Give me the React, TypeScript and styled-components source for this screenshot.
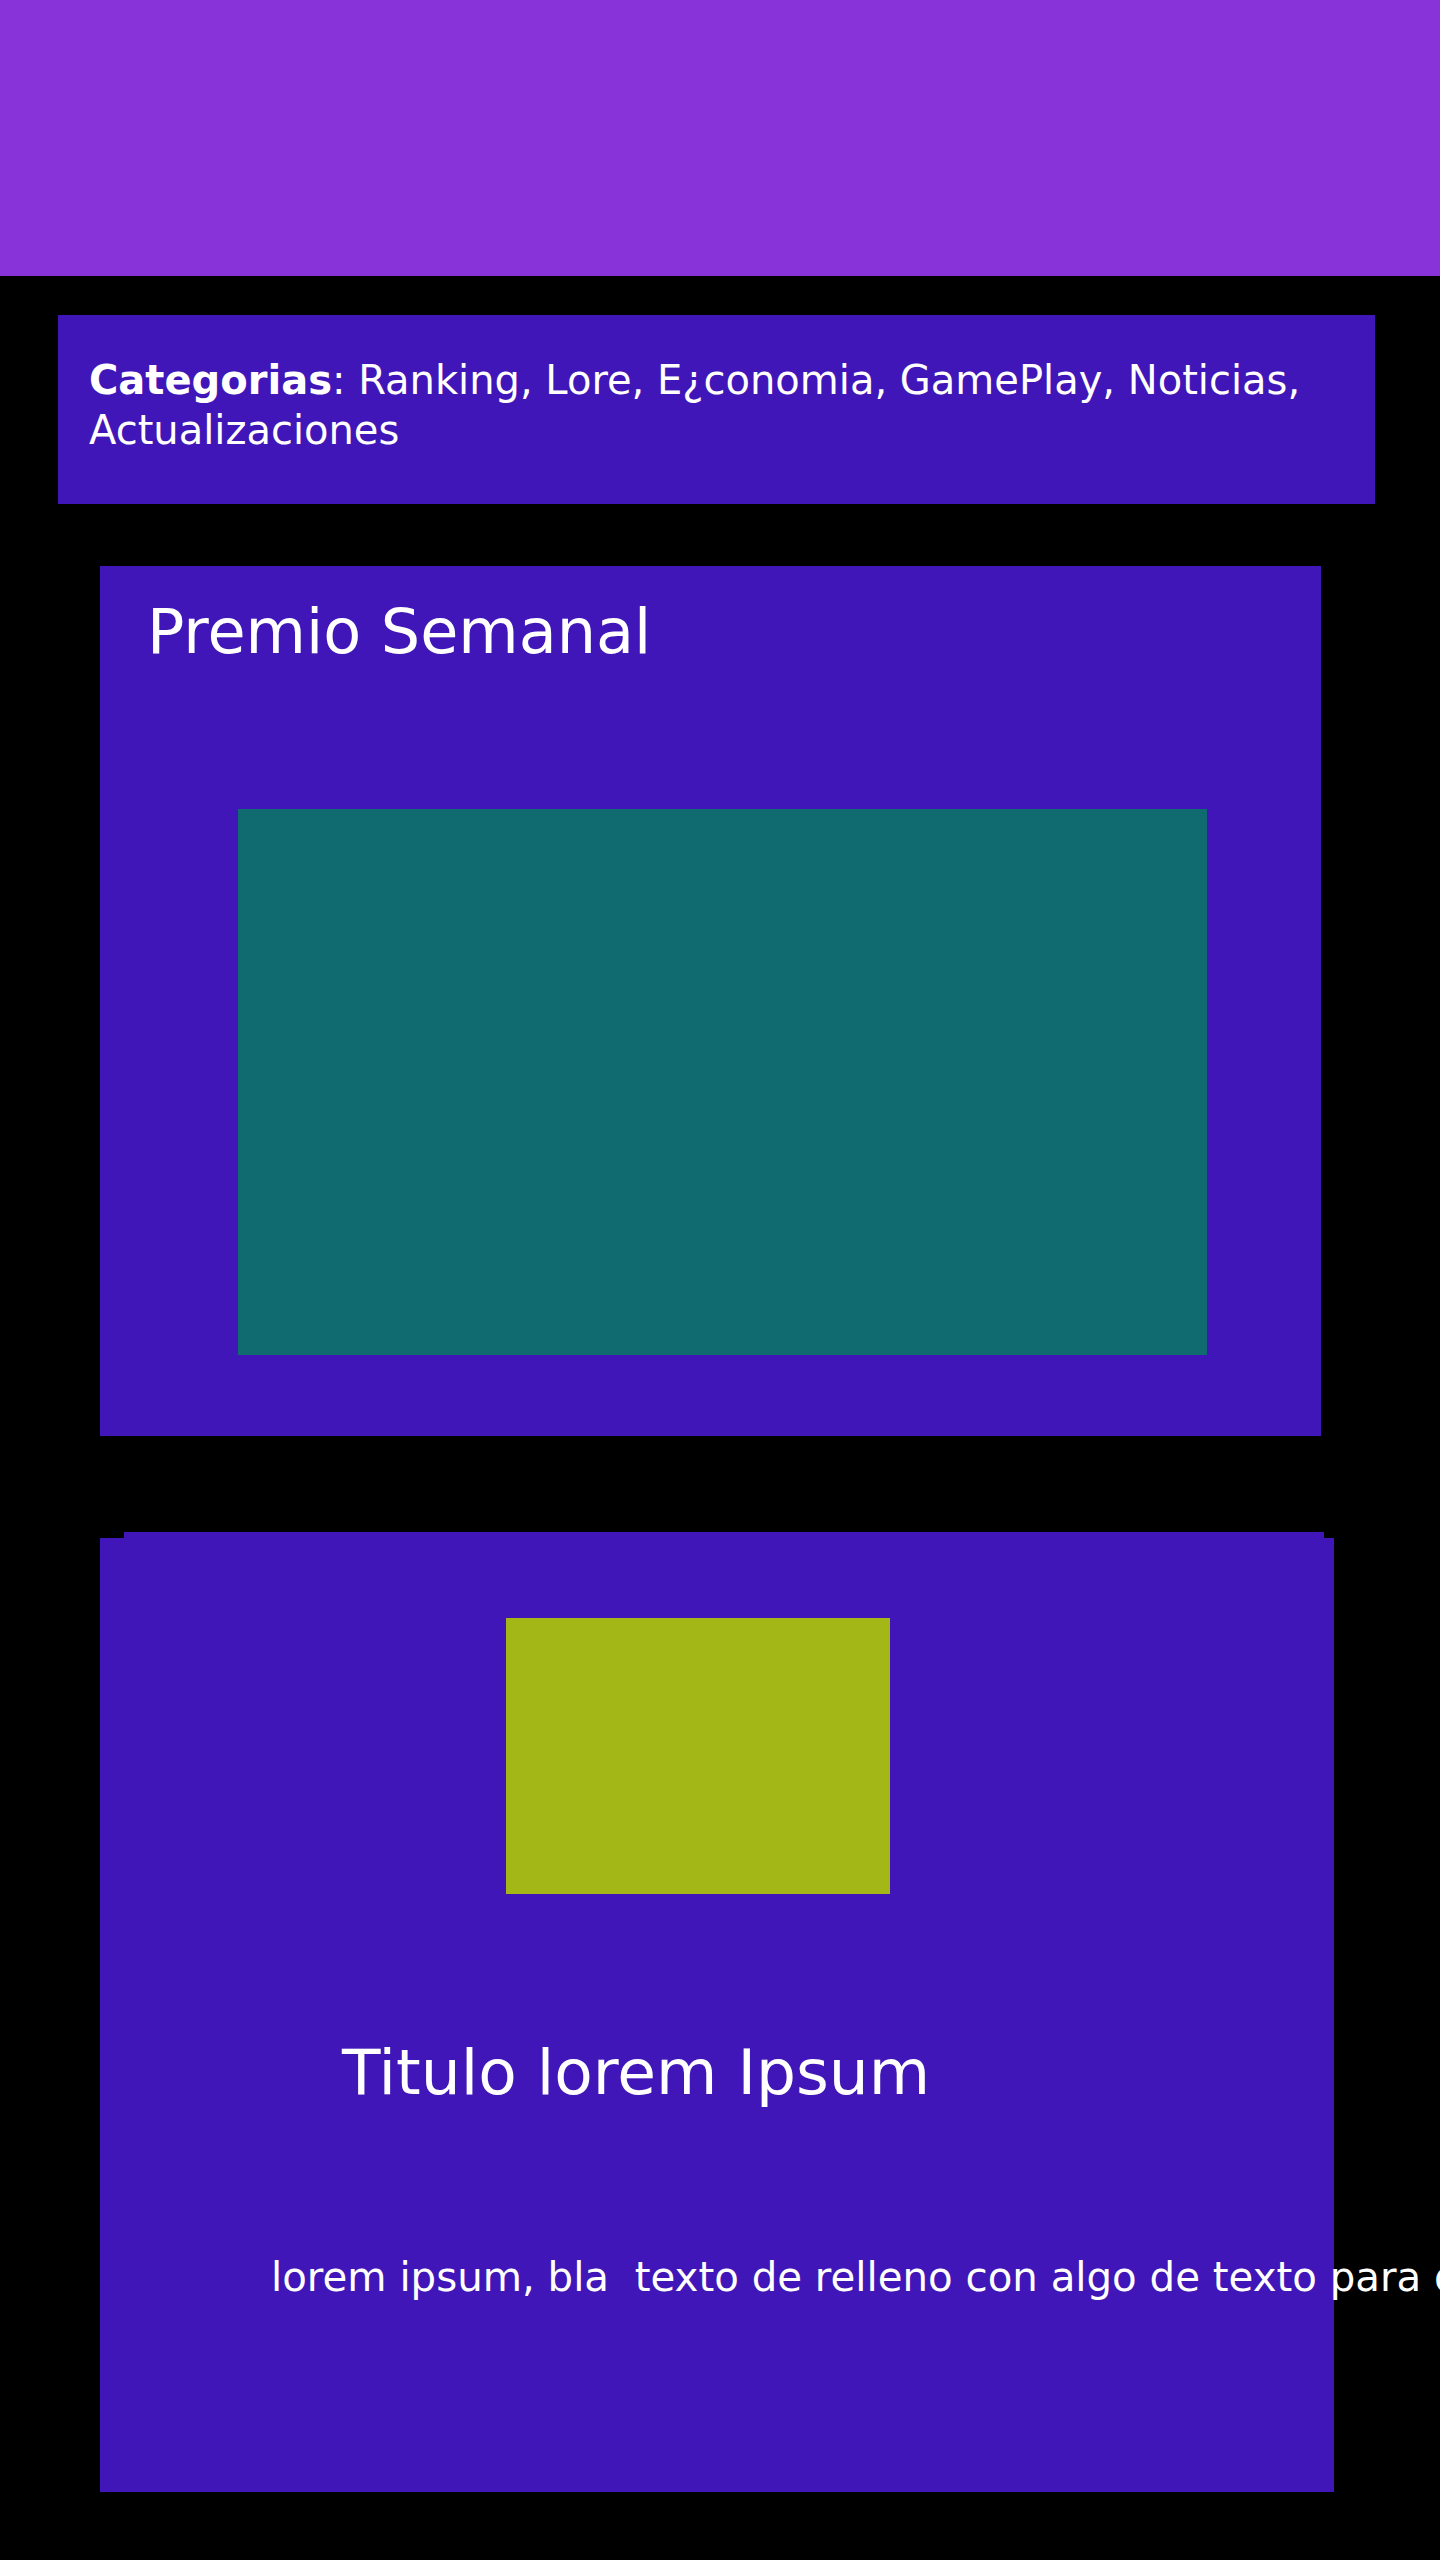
import React from "react";
import styled, { createGlobalStyle } from "styled-components";

const GlobalStyle = createGlobalStyle`
  html, body {
    margin: 0;
    padding: 0;
    background: #000000;
    overflow-x: hidden;
  }
  body {
    font-family: "DejaVu Sans", Verdana, sans-serif;
    color: #ffffff;
  }
`;

const Page = styled.div`
  display: flex;
  flex-direction: column;
  min-height: 2560px;
  background: #000000;
`;

const Header = styled.header`
  height: 276px;
  background: #8733d9;
`;

const CategoryBar = styled.section`
  margin: 39px 65px 0 58px;
  padding: 40px 32px 49px 31px;
  background: #4016b8;
  font-size: 40px;
  line-height: 50px;
  color: #ffffff;
`;

const CategoryLabel = styled.strong`
  font-weight: bold;
`;

const PrizeCard = styled.section`
  margin: 62px 0 0 100px;
  width: 1221px;
  height: 870px;
  box-sizing: border-box;
  padding: 30px 0 0 0;
  background: #4016b8;
  display: flex;
  flex-direction: column;
`;

const PrizeTitle = styled.h2`
  margin: 0 0 0 47px;
  font-size: 62px;
  line-height: 72px;
  font-weight: normal;
`;

const PrizeImage = styled.div`
  margin: 141px 0 0 138px;
  width: 969px;
  height: 546px;
  background: #106b70;
`;

const ArticleBlock = styled.article`
  margin: 96px 0 0 100px;
  width: 1234px;
  display: flex;
  flex-direction: column;
`;

const ArticleTab = styled.div`
  height: 6px;
  margin: 0 10px 0 24px;
  background: #4016b8;
`;

const ArticleCard = styled.div`
  height: 954px;
  box-sizing: border-box;
  padding-top: 80px;
  background: #4016b8;
  display: flex;
  flex-direction: column;
`;

const ArticleImage = styled.div`
  margin-left: 406px;
  width: 384px;
  height: 276px;
  background: #a3b817;
`;

const ArticleTitle = styled.h3`
  margin: 143px 0 0 242px;
  font-size: 63px;
  line-height: 72px;
  font-weight: normal;
`;

const ArticleText = styled.p`
  margin: 146px 0 0 171px;
  font-size: 40.3px;
  line-height: 46px;
  white-space: pre;
`;

export default function App() {
  return (
    <>
      <GlobalStyle />
      <Page>
        <Header />
        <CategoryBar>
          <CategoryLabel>Categorias</CategoryLabel>: Ranking, Lore, E¿conomia, GamePlay, Noticias,
          Actualizaciones
        </CategoryBar>
        <PrizeCard>
          <PrizeTitle>Premio Semanal</PrizeTitle>
          <PrizeImage />
        </PrizeCard>
        <ArticleBlock>
          <ArticleTab />
          <ArticleCard>
            <ArticleImage />
            <ArticleTitle>Titulo lorem Ipsum</ArticleTitle>
            <ArticleText>{"lorem ipsum, bla  texto de relleno con algo de texto para darle contenido a la tarjeta"}</ArticleText>
          </ArticleCard>
        </ArticleBlock>
      </Page>
    </>
  );
}
